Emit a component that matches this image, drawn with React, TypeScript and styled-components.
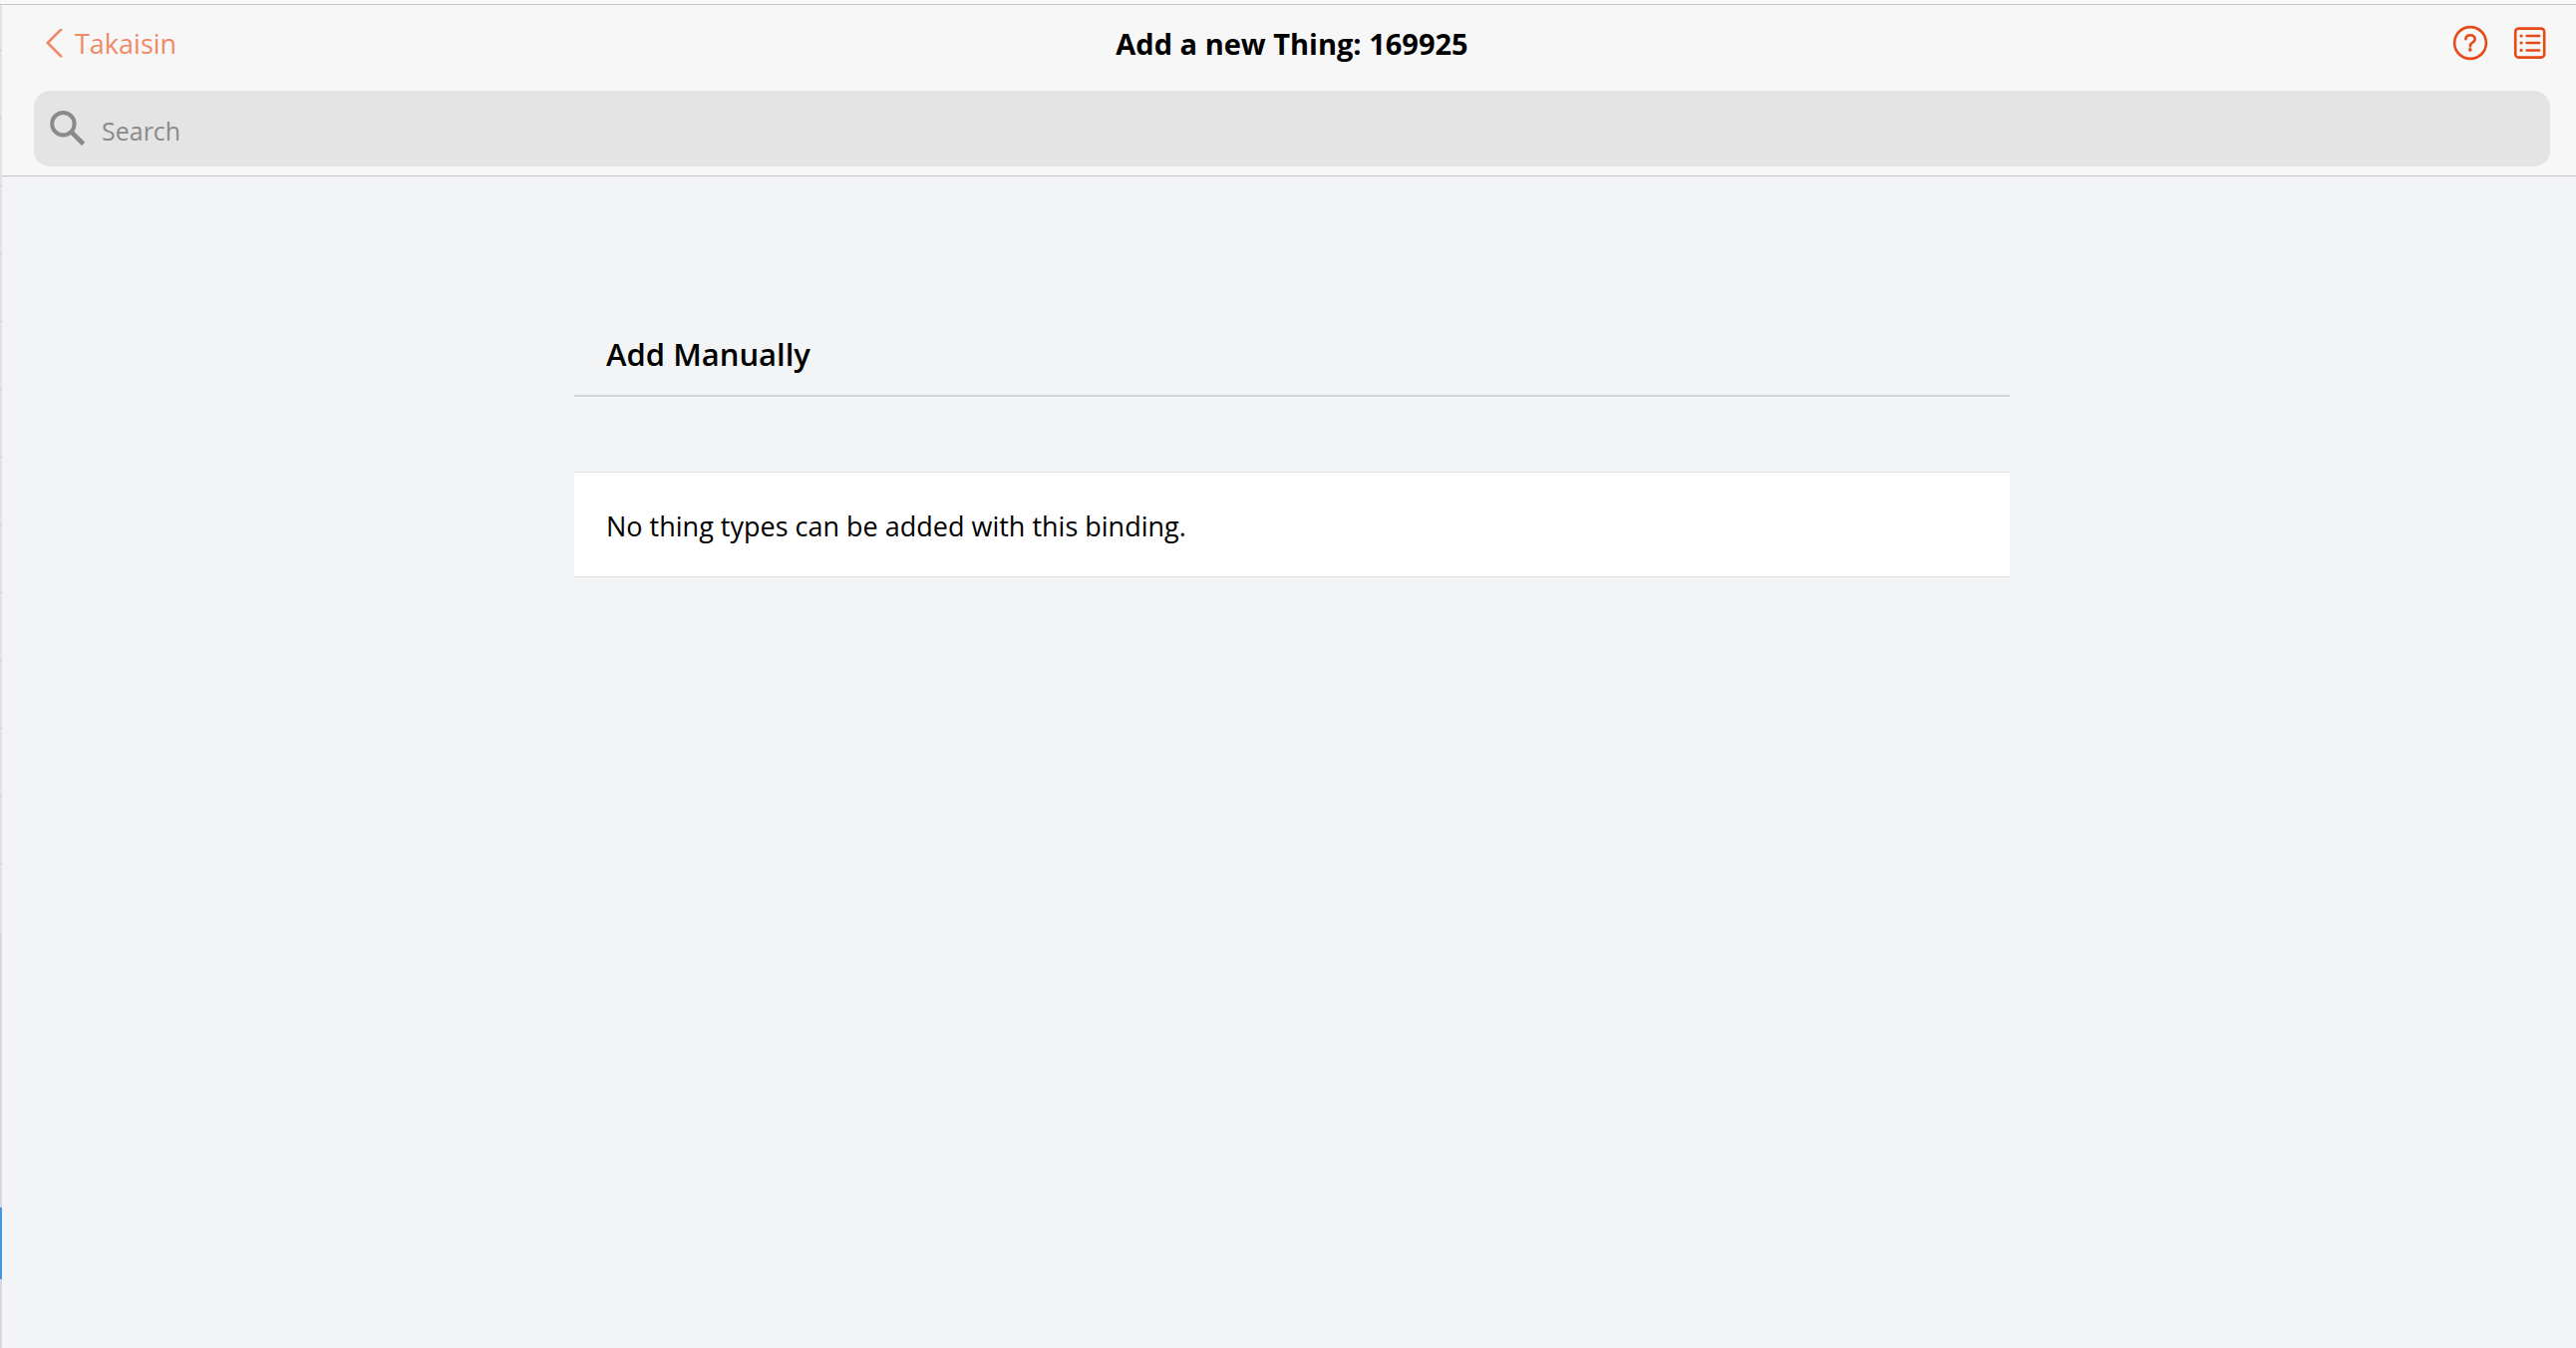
import React from "react";
import styled, { createGlobalStyle } from "styled-components";

const GlobalStyle = createGlobalStyle`
  *, *::before, *::after { box-sizing: border-box; }
  body {
    margin: 0;
    background: #f3f4f6;
    color: #000;
    font-family: "Segoe UI", "Open Sans", "Noto Sans", sans-serif;
    overflow: hidden;
  }
`;

const Shell = styled.div`
  display: flex;
  min-height: 100vh;
  padding-top: 4px;
  background: #f9f9fb;
  overflow: hidden;
`;

const Rail = styled.aside`
  flex: none;
  display: flex;
  flex-direction: column;
  width: 2px;
  border-top: 1px solid #c8c8cb;
  background: #d9d9db;
`;

const RailItems = styled.div`
  height: 930px;
  background: repeating-linear-gradient(#e2e2e5 0 67px, #c8c8cb 67px 68px) 0 -22px;
`;

const RailActive = styled.div`
  height: 72px;
  margin-top: 276px;
  background: #4496dc;
`;

const Page = styled.main`
  flex: 1;
  min-width: 0;
  margin-right: -6px;
  background: #f3f4f6;
`;

const Header = styled.header`
  background: #f7f7f7;
  border-top: 1px solid #c8c8cb;
  border-bottom: 1px solid #c4c4c7;
  padding: 0 32px 9px;
`;

const NavBar = styled.div`
  display: grid;
  grid-template-columns: 1fr auto 1fr;
  align-items: center;
  height: 78px;
  margin-bottom: 8px;
`;

const BackLink = styled.a`
  justify-self: start;
  display: flex;
  align-items: center;
  gap: 12px;
  padding-left: 12px;
  color: #f08966;
  font-size: 27px;
  line-height: 40px;
  text-decoration: none;
`;

const Title = styled.h1`
  margin: 0;
  font-size: 29px;
  font-weight: 700;
  line-height: 40px;
`;

const Actions = styled.div`
  justify-self: end;
  display: flex;
  gap: 24px;
  padding: 0 2px 2px 0;
`;

const IconButton = styled.button`
  display: flex;
  padding: 0;
  border: 0;
  background: none;
  color: #e64a19;
  cursor: pointer;
`;

const SearchField = styled.label`
  display: flex;
  align-items: center;
  gap: 16px;
  height: 76px;
  padding: 0 16px;
  border-radius: 16px;
  background: #e4e4e4;
  color: #8a8a8a;
`;

const SearchInput = styled.input`
  flex: 1;
  min-width: 0;
  height: 40px;
  margin-top: 4px;
  padding: 0;
  border: 0;
  outline: 0;
  background: none;
  color: #000;
  font-family: inherit;
  font-size: 25px;
  &::placeholder { color: #8a8a8a; opacity: 1; }
`;

const Content = styled.div`
  max-width: 1440px;
  margin: 0 auto;
  padding-top: 136px;
`;

const BlockTitle = styled.h2`
  margin: 0 0 75px;
  padding: 22px 32px 21px;
  border-bottom: 2px solid #d3d4d6;
  font-size: 31px;
  font-weight: 600;
  line-height: 40px;
`;

const Card = styled.p`
  margin: 0;
  padding: 34px 32px 30px;
  border: solid #dedfe1;
  border-width: 1px 0;
  background: #fff;
  font-size: 27px;
  line-height: 40px;
`;

const BackIcon = () => (
  <svg width="17" height="30" viewBox="0 0 17 30" fill="none" stroke="currentColor" strokeWidth="2.6" strokeLinecap="round" strokeLinejoin="round" aria-hidden="true">
    <path d="M15.2 .6 1.8 14l13.4 13.4" />
  </svg>
);

const SearchIcon = () => (
  <svg width="36" height="36" viewBox="0 0 36 36" fill="none" stroke="currentColor" aria-hidden="true">
    <circle cx="13.4" cy="13.2" r="11.2" strokeWidth="4" />
    <path d="m21.8 21.6 11.8 11.8" strokeWidth="4.8" />
  </svg>
);

const HelpIcon = () => (
  <svg width="36" height="36" viewBox="0 0 36 36" fill="none" stroke="currentColor" aria-hidden="true">
    <circle cx="18" cy="18" r="15.9" strokeWidth="2.6" />
    <path d="M13.4 14.1c.2-2.5 2.1-3.8 4.6-3.8 2.7 0 4.7 1.5 4.7 3.8 0 1.7-.9 2.6-2.4 3.5-1.8 1.1-2.4 1.8-2.4 3.3v.5" strokeWidth="2.6" strokeLinecap="round" />
    <circle cx="17.8" cy="24.9" r="1.8" fill="currentColor" stroke="none" />
  </svg>
);

const ListIcon = () => (
  <svg width="36" height="36" viewBox="0 0 36 36" fill="none" stroke="currentColor" strokeLinecap="round" aria-hidden="true">
    <rect x="3.2" y="3.6" width="29" height="29" rx="3.2" strokeWidth="2.6" />
    <path d="M14.6 11h12.6M14.6 18h12.6M14.6 25.4h12.6" strokeWidth="2.5" />
    <path d="M9 11h.1M9 18h.1M9 25.4h.1" strokeWidth="3.1" />
  </svg>
);

export default function App() {
  return (
    <>
      <GlobalStyle />
      <Shell>
        <Rail aria-hidden="true">
          <RailItems />
          <RailActive />
        </Rail>
        <Page>
          <Header>
            <NavBar>
              <BackLink href="#back">
                <BackIcon />
                Takaisin
              </BackLink>
              <Title>Add a new Thing: 169925</Title>
              <Actions>
                <IconButton type="button" aria-label="Help"><HelpIcon /></IconButton>
                <IconButton type="button" aria-label="Details"><ListIcon /></IconButton>
              </Actions>
            </NavBar>
            <SearchField>
              <SearchIcon />
              <SearchInput type="search" placeholder="Search" aria-label="Search" />
            </SearchField>
          </Header>
          <Content>
            <BlockTitle>Add Manually</BlockTitle>
            <Card>No thing types can be added with this binding.</Card>
          </Content>
        </Page>
      </Shell>
    </>
  );
}
